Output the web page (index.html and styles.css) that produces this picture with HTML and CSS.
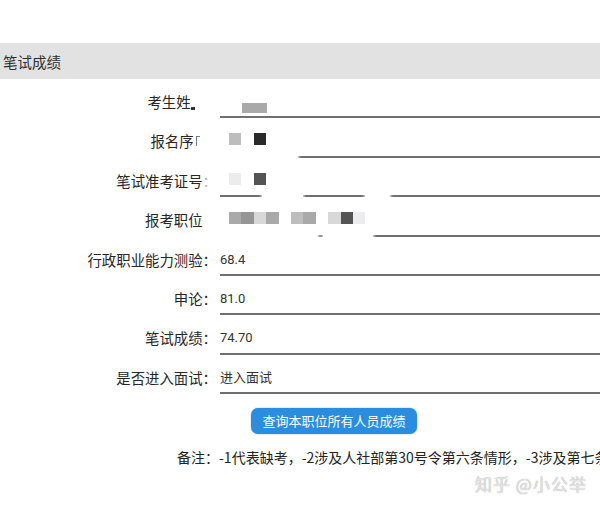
FILE: index.html
```html
<!DOCTYPE html>
<html lang="zh-CN">
<head>
    <meta charset="UTF-8">
    <meta name="viewport" content="width=device-width, initial-scale=1.0">
    <title>笔试成绩</title>
    <link rel="stylesheet" href="styles.css">
</head>
<body>
    <div class="header">笔试成绩</div>

    <div class="form">
        <div class="row">
            <div class="label">考生姓<span class="smudge"></span><span class="hid">：</span></div>
            <div class="value">
                <div class="mosaic first"><span class="blk wide g3"></span></div>
            </div>
        </div>
        <div class="row">
            <div class="label">报名序<span class="frag"></span><span class="hid">：</span></div>
            <div class="value">
                <div class="mosaic">
                    <span class="blk g2"></span><span class="blk"></span><span class="blk g9"></span>
                </div>
                <span class="mask" style="left: 0; width: 78px;"></span>
            </div>
        </div>
        <div class="row">
            <div class="label">笔试准考证号<span class="faint">：</span></div>
            <div class="value">
                <div class="mosaic">
                    <span class="blk g0"></span><span class="blk"></span><span class="blk g7"></span>
                </div>
                <span class="mask" style="left: 42px; width: 41px;"></span>
                <span class="mask" style="left: 145px; width: 25px;"></span>
            </div>
        </div>
        <div class="row">
            <div class="label">报考职位<span class="hid">：</span></div>
            <div class="value">
                <div class="mosaic">
                    <span class="blk g3"></span><span class="blk g4"></span><span class="blk g1"></span><span class="blk g3"></span><span class="blk"></span><span class="blk g2"></span><span class="blk g3"></span><span class="blk"></span><span class="blk g1"></span><span class="blk g7"></span><span class="blk g0"></span>
                </div>
                <span class="mask" style="left: 0; width: 98px;"></span>
                <span class="mask" style="left: 103px; width: 50px;"></span>
            </div>
        </div>
        <div class="row">
            <div class="label">行政职业能力测验：</div>
            <div class="value">68.4</div>
        </div>
        <div class="row">
            <div class="label">申论：</div>
            <div class="value">81.0</div>
        </div>
        <div class="row">
            <div class="label">笔试成绩：</div>
            <div class="value">74.70</div>
        </div>
        <div class="row">
            <div class="label">是否进入面试：</div>
            <div class="value">进入面试</div>
        </div>
    </div>

    <div class="actions">
        <button class="btn">查询本职位所有人员成绩</button>
    </div>

    <p class="note">备注：-1代表缺考，-2涉及人社部第30号令第六条情形，-3涉及第七条</p>

    <div class="watermark">知乎 @小公举</div>
</body>
</html>
```

FILE: styles.css
```css
body {
    margin: 0;
    padding-top: 43px;
    background-color: #fff;
    font-family: "Noto Sans CJK SC", "Noto Sans", sans-serif;
    color: #262626;
    overflow: hidden;
    position: relative;
    height: 509px;
    box-sizing: border-box;
}
.header {
    height: 36px;
    line-height: 38px;
    padding-left: 3px;
    background-color: #e2e2e2;
    font-size: 14.5px;
    color: #2e2e2e;
}
.row {
    display: grid;
    grid-template-columns: 217px 1fr;
    column-gap: 3px;
    height: 39.4px;
}
.label {
    font-size: 14.4px;
    line-height: 20px;
    padding-top: 13px;
    text-align: right;
    white-space: nowrap;
}
.hid {
    color: transparent;
}
.faint {
    color: #b5b5b5;
}
.frag {
    display: inline-block;
    width: 3px;
    height: 9px;
    margin: 0 3px 0 2px;
    border-left: 1px solid #777;
    border-top: 1px solid #777;
    vertical-align: 1px;
}
.smudge {
    display: inline-block;
    width: 4px;
    height: 3px;
    background-color: #333;
    margin-right: 8px;
    vertical-align: -2px;
}
.value {
    position: relative;
    border-bottom: 2px solid #707070;
    font-family: Roboto, "Noto Sans CJK SC", sans-serif;
    font-size: 13px;
    line-height: 20px;
    padding-top: 13px;
    color: #333;
}
.mosaic {
    display: flex;
    margin-left: 9px;
    margin-top: 2px;
    filter: blur(0.6px);
}
.mosaic.first {
    margin-left: 22px;
    margin-top: 11px;
}
.blk {
    width: 12.4px;
    height: 12px;
}
.blk.wide {
    width: 25px;
    height: 10px;
}
.g0 { background-color: #ececf0; }
.g1 { background-color: #d8d8d8; }
.g2 { background-color: #bdbdbd; }
.g3 { background-color: #a9a9a9; }
.g4 { background-color: #959595; }
.g7 { background-color: #545454; }
.g9 { background-color: #2a2a2a; }
.mask {
    position: absolute;
    bottom: -2px;
    height: 2px;
    background-color: #fff;
    box-shadow: 0 0 3px 1px #fff;
}
.actions {
    padding-left: 251px;
    margin-top: 13px;
}
.btn {
    width: 166px;
    height: 26px;
    padding: 0;
    border: none;
    border-radius: 7px;
    background-color: #2b8de0;
    color: #fff;
    font-family: "Noto Sans CJK SC", sans-serif;
    font-size: 13px;
    box-shadow: 0 0 2px rgba(43, 141, 224, 0.5);
}
.note {
    margin: 13px 0 0 0;
    padding-left: 177px;
    font-size: 14px;
    line-height: 20px;
    white-space: nowrap;
    color: #222;
}
.watermark {
    position: absolute;
    left: 475px;
    top: 471px;
    font-size: 17px;
    letter-spacing: 1px;
    color: #e4e4e4;
    text-shadow: 0 0 1px #999;
}
```
